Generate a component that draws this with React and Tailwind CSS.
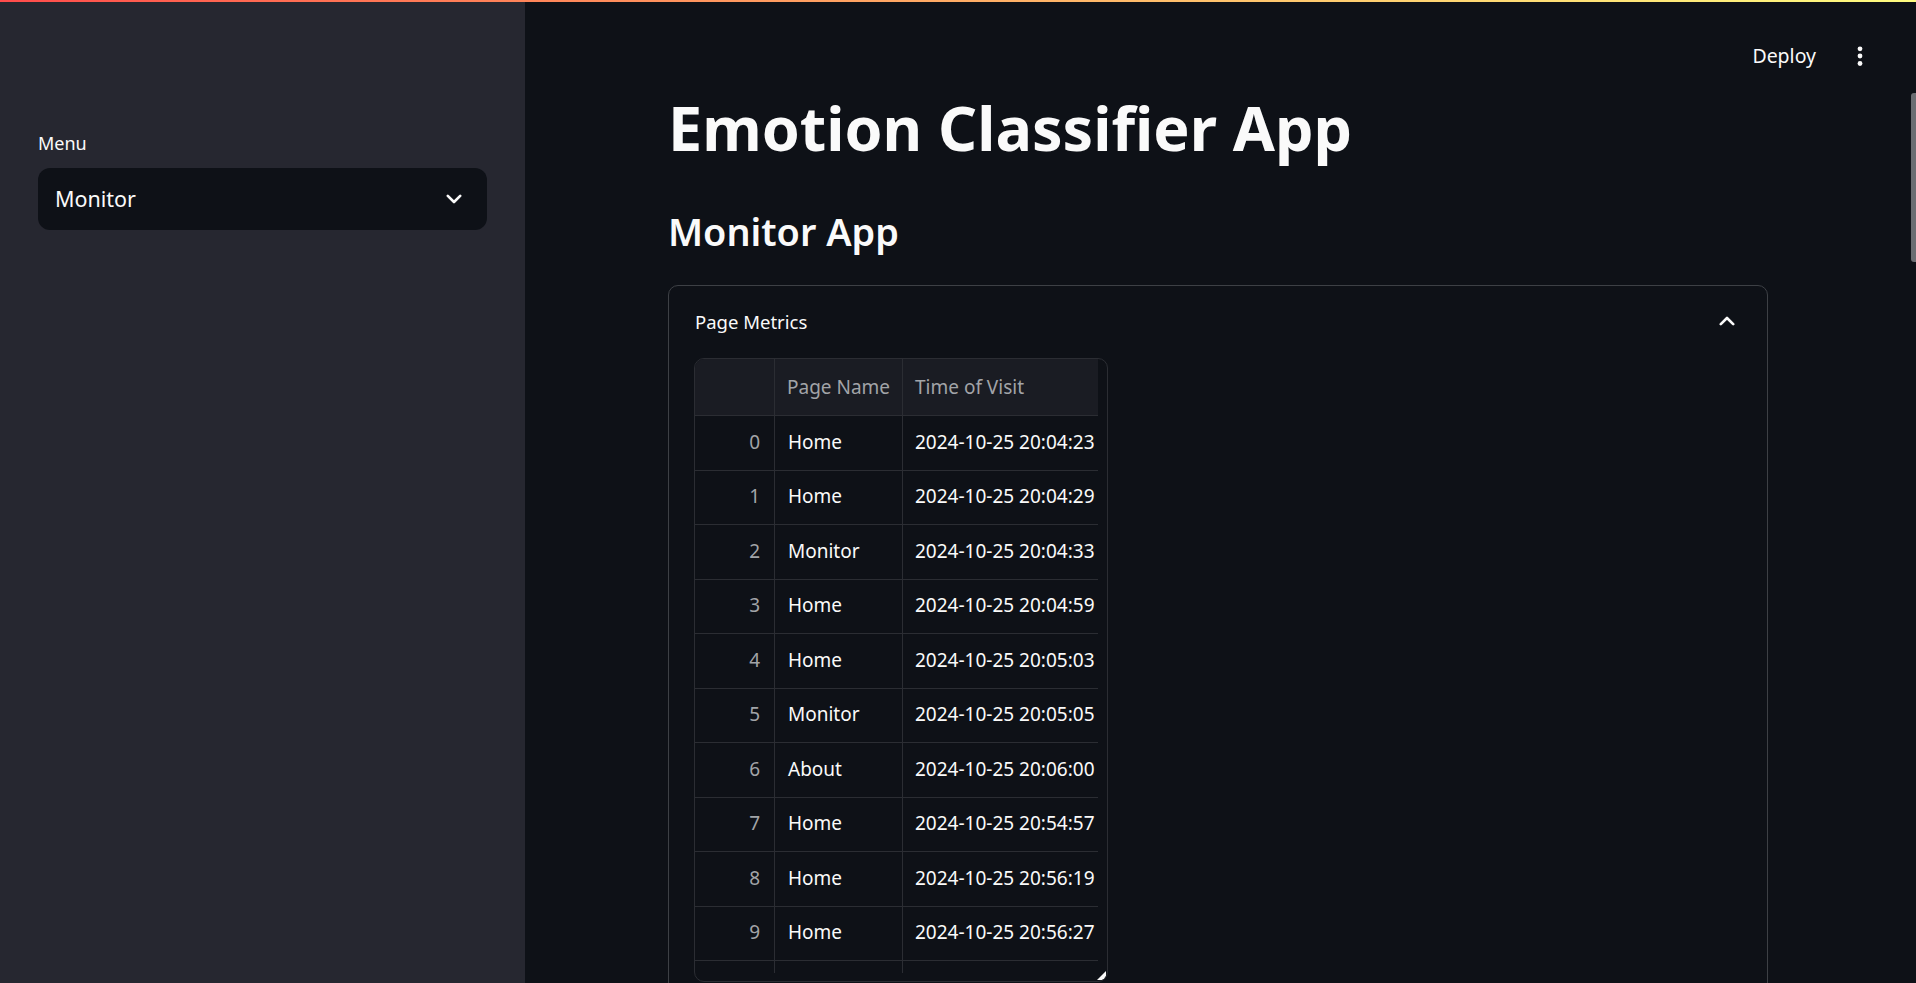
import React from "react";

const rows = [
  ["Home", "2024-10-25 20:04:23"],
  ["Home", "2024-10-25 20:04:29"],
  ["Monitor", "2024-10-25 20:04:33"],
  ["Home", "2024-10-25 20:04:59"],
  ["Home", "2024-10-25 20:05:03"],
  ["Monitor", "2024-10-25 20:05:05"],
  ["About", "2024-10-25 20:06:00"],
  ["Home", "2024-10-25 20:54:57"],
  ["Home", "2024-10-25 20:56:19"],
  ["Home", "2024-10-25 20:56:27"],
];

function Table() {
  return (
    <div className="relative w-[414px] rounded-[10px] border border-[#2b2d33] pr-[9px] pb-[8px] overflow-hidden">
      <div className="h-[614px] overflow-hidden">
        <div className="flex h-[57px] border-b border-[#2b2d33] text-[19px] text-[#a2a4a8]">
          <div className="w-[80px] shrink-0 bg-[#1a1c23] border-r border-[#2b2d33]" />
          <div className="w-[128px] shrink-0 bg-[#1a1c23] border-r border-[#2b2d33] flex items-center pl-[12px]">
            Page Name
          </div>
          <div className="w-[195px] shrink-0 bg-[#1a1c23] flex items-center pl-[12px] whitespace-nowrap">
            Time of Visit
          </div>
        </div>
        {rows.map((r, i) => (
          <div key={i} className="flex h-[54.5px] border-b border-[#2b2d33] text-[19px] text-[#fafafa]">
            <div className="w-[80px] shrink-0 border-r border-[#2b2d33] flex items-center justify-end pr-[14px] pb-[2px] text-[#a2a4a8]">
              {i}
            </div>
            <div className="w-[128px] shrink-0 border-r border-[#2b2d33] flex items-center pl-[13px] pb-[2px]">
              {r[0]}
            </div>
            <div className="w-[195px] shrink-0 flex items-center pl-[12px] pb-[2px] whitespace-nowrap">
              {r[1]}
            </div>
          </div>
        ))}
        <div className="flex h-[54.5px] border-b border-[#2b2d33]">
          <div className="w-[80px] shrink-0 border-r border-[#2b2d33]" />
          <div className="w-[128px] shrink-0 border-r border-[#2b2d33]" />
          <div className="w-[195px] shrink-0" />
        </div>
      </div>
      <svg className="absolute right-[1px] bottom-[1px]" width="9" height="9" viewBox="0 0 9 9">
        <polygon points="9,0 9,9 0,9" fill="#fafafa" />
      </svg>
    </div>
  );
}

export default function App() {
  return (
    <div className="relative flex h-[983px] w-full overflow-hidden bg-[#0e1117] font-['Noto_Sans',sans-serif] text-[#fafafa]">
      <div className="absolute left-0 right-0 top-0 z-10 h-[2px] bg-gradient-to-r from-[#ff4b4b] to-[#fffd80]" />

      <aside className="w-[525px] shrink-0 bg-[#262730] px-[38px] pt-[129px]">
        <div className="mb-[11px] text-[18px] leading-[28px] text-[#fafafa]">Menu</div>
        <div className="flex h-[62px] items-center justify-between rounded-[12px] bg-[#0e1117] pl-[17px] pr-[25px]">
          <span className="text-[21.5px]">Monitor</span>
          <svg width="16" height="10" viewBox="0 0 16 10" fill="none">
            <polyline points="1.8,1.8 8,8 14.2,1.8" stroke="#fafafa" strokeWidth="2.6" strokeLinecap="round" strokeLinejoin="round" />
          </svg>
        </div>
      </aside>

      <main className="relative flex-1 overflow-hidden">
        <div className="absolute right-[53px] top-[42px] flex h-[28px] items-center gap-[41px]">
          <span className="text-[19.5px] leading-[28px]">Deploy</span>
          <svg width="6" height="20" viewBox="0 0 6 20">
            <circle cx="3" cy="2.8" r="2.4" fill="#fafafa" />
            <circle cx="3" cy="10" r="2.4" fill="#fafafa" />
            <circle cx="3" cy="17.5" r="2.4" fill="#fafafa" />
          </svg>
        </div>
        <div className="absolute right-0 top-[93px] h-[169px] w-[5px] rounded-l-[3px] bg-[#6b6d72]" />

        <div className="ml-[143px] w-[1100px] pt-[92px]">
          <h1 className="text-[61px] font-bold leading-[72px]">Emotion Classifier App</h1>
          <h2 className="mt-[45px] text-[37.8px] font-semibold leading-[46px]">Monitor App</h2>
          <div className="mt-[30px] rounded-[10px] border border-[#3d4045] pb-[30px]">
            <div className="flex h-[72px] items-center justify-between pl-[26px] pr-[32px]">
              <span className="text-[18.5px]">Page Metrics</span>
              <svg className="-mt-[2px]" width="16" height="10" viewBox="0 0 16 10" fill="none">
                <polyline points="1.8,8.2 8,2 14.2,8.2" stroke="#fafafa" strokeWidth="2.6" strokeLinecap="round" strokeLinejoin="round" />
              </svg>
            </div>
            <div className="pl-[25px]">
              <Table />
            </div>
          </div>
        </div>
      </main>
    </div>
  );
}
